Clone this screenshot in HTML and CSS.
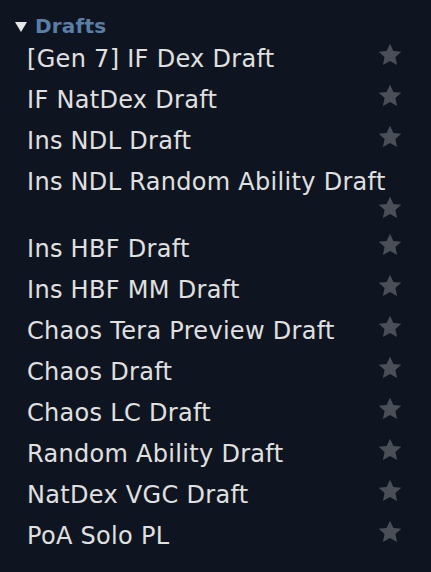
FILE: index.html
```html
<!DOCTYPE html>
<html lang="en">

<head>
  <meta charset="UTF-8">
  <meta name="viewport" content="width=device-width, initial-scale=1.0">
  <title>Formats</title>
  <link rel="stylesheet" href="styles.css">
</head>

<body>
  <div class="format-list">
    <h2 class="section-title"><span class="arrow"></span>Drafts</h2>
    <ul class="formats">
      <li class="format"><span class="format-name">[Gen 7] IF Dex Draft</span><span class="star"><svg viewBox="0 0 24 24"><path d="M12 .8l3.4 7.2 7.9.8-5.9 5.3 1.7 7.9L12 18l-7.1 4 1.7-7.9L.7 8.8l7.9-.8z"/></svg></span></li>
      <li class="format"><span class="format-name">IF NatDex Draft</span><span class="star"><svg viewBox="0 0 24 24"><path d="M12 .8l3.4 7.2 7.9.8-5.9 5.3 1.7 7.9L12 18l-7.1 4 1.7-7.9L.7 8.8l7.9-.8z"/></svg></span></li>
      <li class="format"><span class="format-name">Ins NDL Draft</span><span class="star"><svg viewBox="0 0 24 24"><path d="M12 .8l3.4 7.2 7.9.8-5.9 5.3 1.7 7.9L12 18l-7.1 4 1.7-7.9L.7 8.8l7.9-.8z"/></svg></span></li>
      <li class="format"><span class="format-name">Ins NDL Random Ability Draft</span><span class="star"><svg viewBox="0 0 24 24"><path d="M12 .8l3.4 7.2 7.9.8-5.9 5.3 1.7 7.9L12 18l-7.1 4 1.7-7.9L.7 8.8l7.9-.8z"/></svg></span></li>
      <li class="format"><span class="format-name">Ins HBF Draft</span><span class="star"><svg viewBox="0 0 24 24"><path d="M12 .8l3.4 7.2 7.9.8-5.9 5.3 1.7 7.9L12 18l-7.1 4 1.7-7.9L.7 8.8l7.9-.8z"/></svg></span></li>
      <li class="format"><span class="format-name">Ins HBF MM Draft</span><span class="star"><svg viewBox="0 0 24 24"><path d="M12 .8l3.4 7.2 7.9.8-5.9 5.3 1.7 7.9L12 18l-7.1 4 1.7-7.9L.7 8.8l7.9-.8z"/></svg></span></li>
      <li class="format"><span class="format-name">Chaos Tera Preview Draft</span><span class="star"><svg viewBox="0 0 24 24"><path d="M12 .8l3.4 7.2 7.9.8-5.9 5.3 1.7 7.9L12 18l-7.1 4 1.7-7.9L.7 8.8l7.9-.8z"/></svg></span></li>
      <li class="format"><span class="format-name">Chaos Draft</span><span class="star"><svg viewBox="0 0 24 24"><path d="M12 .8l3.4 7.2 7.9.8-5.9 5.3 1.7 7.9L12 18l-7.1 4 1.7-7.9L.7 8.8l7.9-.8z"/></svg></span></li>
      <li class="format"><span class="format-name">Chaos LC Draft</span><span class="star"><svg viewBox="0 0 24 24"><path d="M12 .8l3.4 7.2 7.9.8-5.9 5.3 1.7 7.9L12 18l-7.1 4 1.7-7.9L.7 8.8l7.9-.8z"/></svg></span></li>
      <li class="format"><span class="format-name">Random Ability Draft</span><span class="star"><svg viewBox="0 0 24 24"><path d="M12 .8l3.4 7.2 7.9.8-5.9 5.3 1.7 7.9L12 18l-7.1 4 1.7-7.9L.7 8.8l7.9-.8z"/></svg></span></li>
      <li class="format"><span class="format-name">NatDex VGC Draft</span><span class="star"><svg viewBox="0 0 24 24"><path d="M12 .8l3.4 7.2 7.9.8-5.9 5.3 1.7 7.9L12 18l-7.1 4 1.7-7.9L.7 8.8l7.9-.8z"/></svg></span></li>
      <li class="format"><span class="format-name">PoA Solo PL</span><span class="star"><svg viewBox="0 0 24 24"><path d="M12 .8l3.4 7.2 7.9.8-5.9 5.3 1.7 7.9L12 18l-7.1 4 1.7-7.9L.7 8.8l7.9-.8z"/></svg></span></li>
    </ul>
  </div>
</body>

</html>
```

FILE: styles.css
```css
body {
  margin: 0;
  padding: 0;
  background-color: #0f1520;
  font-family: "DejaVu Sans", Verdana, sans-serif;
  color: #e0e0e0;
}

.format-list {
  padding: 12px 29px 0 15px;
}

.section-title {
  display: flex;
  align-items: center;
  gap: 8px;
  margin: 0;
  height: 27px;
  font-size: 20px;
  font-weight: bold;
  letter-spacing: 0.2px;
  color: #5a7ea6;
}

.arrow {
  width: 0;
  height: 0;
  border-left: 6px solid transparent;
  border-right: 6px solid transparent;
  border-top: 10px solid #e6e6e6;
  margin-top: 2px;
}

.formats {
  list-style: none;
  margin: 0;
  padding: 0 0 0 12px;
}

.format {
  display: flex;
  flex-wrap: wrap;
  align-items: flex-start;
  padding: 5px 0 6px;
}

.format-name {
  font-size: 24px;
  line-height: 30px;
  letter-spacing: 0.3px;
}

.star {
  margin-left: auto;
  margin-top: -1px;
  margin-bottom: 3px;
  width: 24px;
  height: 24px;
}

.star svg {
  display: block;
  width: 24px;
  height: 24px;
  fill: #4a4f57;
}
```
